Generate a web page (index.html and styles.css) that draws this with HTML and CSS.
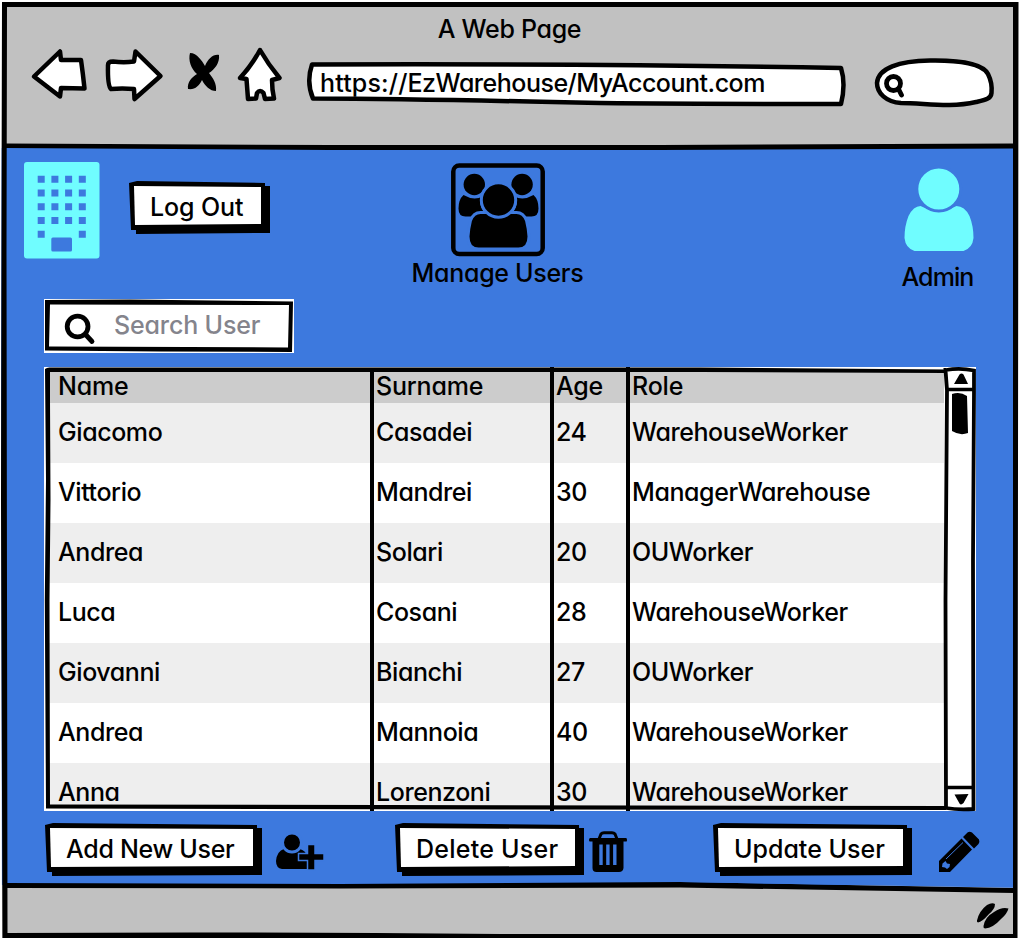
FILE: index.html
```html
<!DOCTYPE html>
<html lang="en">
<head>
<meta charset="utf-8">
<title>Manage Users</title>
<link rel="stylesheet" href="styles.css">
</head>
<body>
<div class="window">
  <header class="browser">
    <div class="browser-title">A Web Page</div>
    <div class="browser-bar">
      <svg class="nav-icon" width="60" height="60" viewBox="30 46 60 60"><path class="sketch" d="M34 76.500L60 51.500L61 60L81 60Q83 74 84.500 88.500L61 88L60 96.500Z"/></svg>
      <svg class="nav-icon" width="62" height="60" viewBox="104 46 62 60"><path class="sketch" d="M108 65Q108 61.500 113 61.500Q124 63 134 61.500L135.500 51.500L160.500 76L134.500 99L134 89Q122 88 111 89Q107.500 86 108 65Z"/></svg>
      <svg class="nav-icon" width="36" height="60" viewBox="186 46 36 60"><path d="M190 53C197 53 202 61 205 66C208 59 213 54 219 55C220 63 214 70 209 73C213 78 217 84 216 91C210 91 205 86 202 80C199 86 195 90 188 89C187 82 192 77 197 74C191 69 188 60 190 53Z"/></svg>
      <svg class="nav-icon" width="50" height="60" viewBox="236 46 50 60"><path class="sketch" d="M260 50Q268 64 279.500 78L272 80Q272 90 274 98.500L265 99L263.500 93Q260 89 257 93L256 98.500L248 99L246.500 79L240 78Q252 65 260 50Z"/></svg>
      <div class="url">
        <svg class="fill" viewBox="306 60 542 46" preserveAspectRatio="none"><path class="sketch" d="M312 64.500Q600 63.500 841 68Q846 84 841 104Q700 104 600 103Q420 99 313 98.500Q306 82 312 64.500Z"/></svg>
        <span><span class="scheme">https://</span>EzWarehouse/MyAccount.com</span>
      </div>
      <svg class="nav-search" width="122" height="52" viewBox="874 57 122 52"><path class="sketch" d="M901 103C886 102 877 93 877 83C878 68 899 61 930 60.500C960 60 983 64 988 74C992 82 992 88 991.500 93C991 99 985 100 976 102C950 108 925 103 901 103Z"/><circle class="ring" cx="893.500" cy="83.500" r="7"/><path class="ring" stroke-linecap="round" d="M898.500 89L901.500 95"/></svg>
    </div>
  </header>

  <main class="page">
    <section class="top">
      <svg class="building" width="76" height="97" viewBox="24 161.500 76 97">
        <rect class="cyan" x="24" y="161.500" width="75.500" height="96.500" rx="3"/>
        <path class="dots" d="M41.200 178.800h.01M54.900 178.800h.01M68.600 178.800h.01M82.300 178.800h.01M41.200 192.500h.01M54.900 192.500h.01M68.600 192.500h.01M82.300 192.500h.01M41.200 206.300h.01M54.900 206.300h.01M68.600 206.300h.01M82.300 206.300h.01M41.200 220h.01M54.900 220h.01M68.600 220h.01M82.300 220h.01M41.200 233.800h.01M82.300 233.800h.01"/>
        <rect class="blue" x="51.300" y="237" width="20.700" height="14" rx="1.500"/>
      </svg>
      <button class="btn logout"><span>Log Out</span></button>
      <div class="manage">
        <svg width="94" height="93" viewBox="450.500 162.500 94 93">
          <rect x="452.800" y="165" width="89.400" height="88.500" rx="6" fill="none" stroke="#000" stroke-width="4.500"/>
          <circle cx="473.800" cy="184" r="10.700"/><circle cx="521.600" cy="184" r="10.700"/>
          <path d="M463 194.500Q474 201 484 195L483 214Q480 216 476 216H465Q458 216 458 208Q458 199 463 194.500ZM533 194.500Q522 201 512 195L513 214Q516 216 520 216H531Q538 216 538 208Q538 199 533 194.500Z"/>
          <circle class="gap" cx="498" cy="200" r="17"/>
          <path class="gap" d="M480 212H516Q523 212 526 220Q528 228 528.500 236Q528.500 248.500 518 248.500H478Q467.500 248.500 467.500 236Q468 228 470 220Q473 212 480 212Z"/>
          <circle class="gap" cx="498" cy="199.500" r="17.200"/>
        </svg>
        <span>Manage Users</span>
      </div>
      <div class="admin">
        <svg width="70" height="84" viewBox="904.500 168 70 84"><path class="cyan" d="M921 206Q939 215 957 206Q965 206 970 216Q974 226 974 238Q973 248 964 251H915Q906 248 905 238Q905 226 909 216Q914 206 921 206Z"/><circle class="cyan" cx="939.300" cy="189" r="22" stroke="#3d79de" stroke-width="3"/></svg>
        <span>Admin</span>
      </div>
    </section>

    <div class="search">
      <svg class="fill" viewBox="44 299 250 54" preserveAspectRatio="none"><path d="M45 300L130 299.500L293 301.500L292 352L160 351.500L45 350.500ZM50 304.500L49 346.500L288 347.500L289 305Z" fill-rule="evenodd"/></svg>
      <svg class="glass" width="32" height="32" viewBox="64 312 32 32"><circle class="ring" cx="77.600" cy="326.500" r="10.400"/><path class="ring" stroke-linecap="round" d="M86 335L92 341.500"/></svg>
      <span>Search User</span>
    </div>

    <div class="table-box">
      <div class="table">
        <div class="row head"><span class="c1">Name</span><span class="c2">Surname</span><span class="c3">Age</span><span class="c4">Role</span></div>
        <div class="row odd"><span class="c1">Giacomo</span><span class="c2">Casadei</span><span class="c3">24</span><span class="c4">WarehouseWorker</span></div>
        <div class="row"><span class="c1">Vittorio</span><span class="c2">Mandrei</span><span class="c3">30</span><span class="c4">ManagerWarehouse</span></div>
        <div class="row odd"><span class="c1">Andrea</span><span class="c2">Solari</span><span class="c3">20</span><span class="c4">OUWorker</span></div>
        <div class="row"><span class="c1">Luca</span><span class="c2">Cosani</span><span class="c3">28</span><span class="c4">WarehouseWorker</span></div>
        <div class="row odd"><span class="c1">Giovanni</span><span class="c2">Bianchi</span><span class="c3">27</span><span class="c4">OUWorker</span></div>
        <div class="row"><span class="c1">Andrea</span><span class="c2">Mannoia</span><span class="c3">40</span><span class="c4">WarehouseWorker</span></div>
        <div class="row odd last"><span class="c1">Anna</span><span class="c2">Lorenzoni</span><span class="c3">30</span><span class="c4">WarehouseWorker</span></div>
      </div>
      <svg class="fill" viewBox="44 367 932 444">
        <rect x="944" y="368" width="31" height="441" fill="#fff"/>
        <path d="M45 369Q47 367.300 50 367.500H700L946 369.500V373L700 372H50V400L50.500 500L49.500 600L50 804.500L946 806V810L500 809.500L46 808.500L44.800 600L46 480Z"/>
        <path d="M370 372h4v439h-4zM550 367h4v444h-4zM626 367h4v444h-4z"/>
        <path d="M946 370Q960 367.500 974 370.500V393L973 560L973.500 809Q958 810 946 808L945.500 600L947 390L945.500 370Z" fill="none" stroke="#000" stroke-width="3.800"/>
        <path d="M947 389.500H975M946 787.500H974" stroke="#000" stroke-width="3.500"/>
        <path d="M954 384L959.500 374.500Q961.500 372.500 963.500 374.500L968 384ZM954.500 794.500L968.500 794L963.500 803Q961 805.500 959.500 803.500ZM952 394Q960 391 967 396L968 433Q960 436 952 431Z"/>
      </svg>
    </div>

    <div class="actions">
      <button class="btn add"><span>Add New User</span></button>
      <svg class="add-icon" width="50" height="38" viewBox="275 832 50 38"><path d="M284 849Q292 855 300 849Q306 851 307 856V869H282Q276 868 276 861Q277 851 284 849Z"/><circle class="gap" cx="292" cy="842.500" r="9.500" stroke-width="1.500"/><path class="gap plus" d="M307.500 844.500H315V853.500H324V860.500H315V870H307.500V860.500H298.500V853.500H307.500Z"/></svg>
      <button class="btn delete"><span>Delete User</span></button>
      <svg class="trash" width="38" height="42" viewBox="589 831 38 42"><path d="M599 839L601 834Q602 832.800 604 832.800H612Q614 832.800 615 834L617 839" fill="none" stroke="#000" stroke-width="3"/><path d="M590 838H626Q627 838 627 840T626 841.500H623.500V868Q623 872 619 872H596.500Q592.500 872 592.500 868V841.500H590Q589 841.500 589 840T590 838Z"/><path d="M601 844.500V865M607.900 844.500V865M614.800 844.500V865" fill="none" stroke="#3d79de" stroke-width="3.400"/></svg>
      <button class="btn update"><span>Update User</span></button>
      <svg class="pencil" width="42" height="42" viewBox="938 831 42 42"><path d="M939 861L961.500 838.500L972 849.500L950 872H939ZM963 837L967.500 832.500Q969.500 831 972 832.500L979 839.500Q980 842 978.500 844L974 848.500Z"/><path d="M946 859L963 842.500" stroke="#3d79de"/><path class="blue" d="M942.500 863.500L945.500 861L947 863.500L950 864L949.500 867L947 869L945 867.500L942 867Z"/></svg>
    </div>
  </main>

  <footer class="status">
    <svg width="34" height="26" viewBox="976 902 34 26"><path d="M977 920.500Q979 911 987 905Q992 902 995 904Q995 909 989 914Q982 922 978 922.500Q976.500 922 977 920.500ZM983.500 926Q985 917 994 912Q1002 906.500 1008.500 908.500Q1007 914 1001 919Q993 928 985 928.500Q983 928 983.500 926Z"/></svg>
  </footer>

  <svg class="frame" width="1019" height="938" viewBox="0 0 1019 938">
    <path fill="#fff" d="M0 0H1019V938H1017V2H2L1 400L2 938H0Z"/>
    <path d="M2 2H1018.500L1017.500 938H2.500L1 500ZM7 7L6.500 250L7.500 933Q250 931.500 500 934H1013V7Z" fill-rule="evenodd"/>
    <path d="M5 143.500L330 145H660L1014 143.500V148.500L660 150H330L5 148Z"/>
    <path d="M5 883L340 884L680 882L1014 888V893L680 887.500L340 888.500L5 888Z"/>
    <path class="blue" d="M680 881L1013 881V887.800L850 885L680 882Z"/>
  </svg>
</div>
</body>
</html>
```
FILE: styles.css
```css
* { box-sizing: border-box; }

body {
  margin: 0;
  font: 500 25px/30px Inter, "Open Sans", sans-serif;
  font-feature-settings: "cv11";
  letter-spacing: -0.3px;
  color: #000;
  background: #fff;
}

svg { display: block; flex: none; overflow: visible; }
span { white-space: nowrap; }

.window {
  position: relative;
  display: flex;
  flex-direction: column;
  width: 1019px;
  height: 938px;
  overflow: hidden;
  background: #c1c1c1;
}

.frame { position: absolute; inset: 0; pointer-events: none; }
.fill { position: absolute; inset: 0; width: 100%; height: 100%; }

.sketch { fill: #fff; stroke: #000; stroke-width: 4.5; stroke-linejoin: round; }
.ring { fill: none; stroke: #000; stroke-width: 4.8; }
.gap { stroke: #3d79de; stroke-width: 3; }
.plus { stroke-width: 1.5; }
.cyan { fill: #70fdff; }
.blue { fill: #3d79de; }
.dots { fill: none; stroke: #3d79de; stroke-width: 7; stroke-linecap: square; }

.browser { height: 148px; padding-top: 14px; }
.browser-title { text-align: center; height: 30px; }
.browser-bar { display: flex; align-items: flex-start; padding: 2px 0 0 30px; gap: 14px; }
.nav-icon:nth-child(3) { margin-left: 6px; }
.url { position: relative; width: 542px; height: 46px; margin: 14px 0 0 6px; padding: 8px 14px; letter-spacing: -0.5px; }
.url span { position: relative; }
.url .scheme { letter-spacing: 0.15px; }
.nav-search { margin: 11px 0 0 12px; }

.page { height: 737px; padding: 0 44px; background: #3d79de; }

.top { display: flex; align-items: flex-start; height: 151px; margin-left: -20px; }
.building { margin-top: 13.5px; }

.btn {
  position: relative;
  flex: none;
  height: 54px;
  padding: 11px 0 13px 21px;
  border: 0;
  background: none;
  font: inherit;
  font-feature-settings: inherit;
  letter-spacing: 0;
  color: #000;
  text-align: left;
}
.btn::before, .btn::after { content: ""; position: absolute; }
.btn::before {
  inset: 0;
  background: #000;
  clip-path: polygon(0 2px, 8px 0, calc(100% - 5px) 2px, calc(100% - 5px) 5px, 100% 5px, 100% calc(100% - 2px), 7px calc(100% - 1px), 7px calc(100% - 5px), 2px calc(100% - 5px));
}
.btn::after {
  inset: 5px 9px 10px 5px;
  background: #fff;
  clip-path: polygon(0 0, 100% 1px, 100% calc(100% - 1px), 1px 100%);
}
.btn span { position: relative; z-index: 1; }

.logout { width: 141px; margin: 33px 0 0 29px; letter-spacing: -0.1px; }
.manage { width: 200px; margin: 14.5px 0 0 127.5px; text-align: center; }
.manage svg, .admin svg { margin: 0 auto; }
.manage span { display: block; margin-top: 2px; }
.admin { width: 100px; margin: 20px 0 0 291px; flex: none; text-align: center; letter-spacing: -0.9px; }
.manage, .building { flex: none; }
.admin span { display: block; margin: 10px 2px 0 0; }

.search { position: relative; display: flex; width: 250px; height: 54px; padding: 11px 0 0 20px; background: #fff; color: #84848c; letter-spacing: -0.15px; }
.search span { margin-left: 18px; }
.glass { margin-top: 2px; }

.table-box { position: relative; width: 932px; height: 444px; margin-top: 14px; padding: 5px 30px 5px 5px; background: #fff; letter-spacing: -0.42px; }
.table { height: 434px; }
.row { display: grid; grid-template-columns: 323px 180px 76px 1fr; height: 60px; padding-bottom: 2px; align-items: center; background: #fff; }
.odd { background: #eee; }
.head { height: 31px; padding: 0; line-height: 28px; align-items: start; background: #ccc; letter-spacing: -0.2px; }
.last { height: 43px; padding: 16px 0 0; line-height: 26px; align-items: start; }
.row span { padding-left: 4px; }
.row .c1 { padding-left: 9px; }

.actions { display: flex; align-items: flex-start; margin: 12px 0 0 1px; }
.add { width: 217px; letter-spacing: -0.3px; }
.add-icon { margin: 9px 0 0 13px; }
.delete { width: 189px; margin-left: 70px; letter-spacing: 0.25px; }
.trash { margin: 8px 0 0 5px; }
.update { width: 199px; margin-left: 86px; }
.pencil { margin: 8px 0 0 26px; }

.status { display: flex; justify-content: flex-end; height: 53px; padding: 17px 9px 0 0; }
```
